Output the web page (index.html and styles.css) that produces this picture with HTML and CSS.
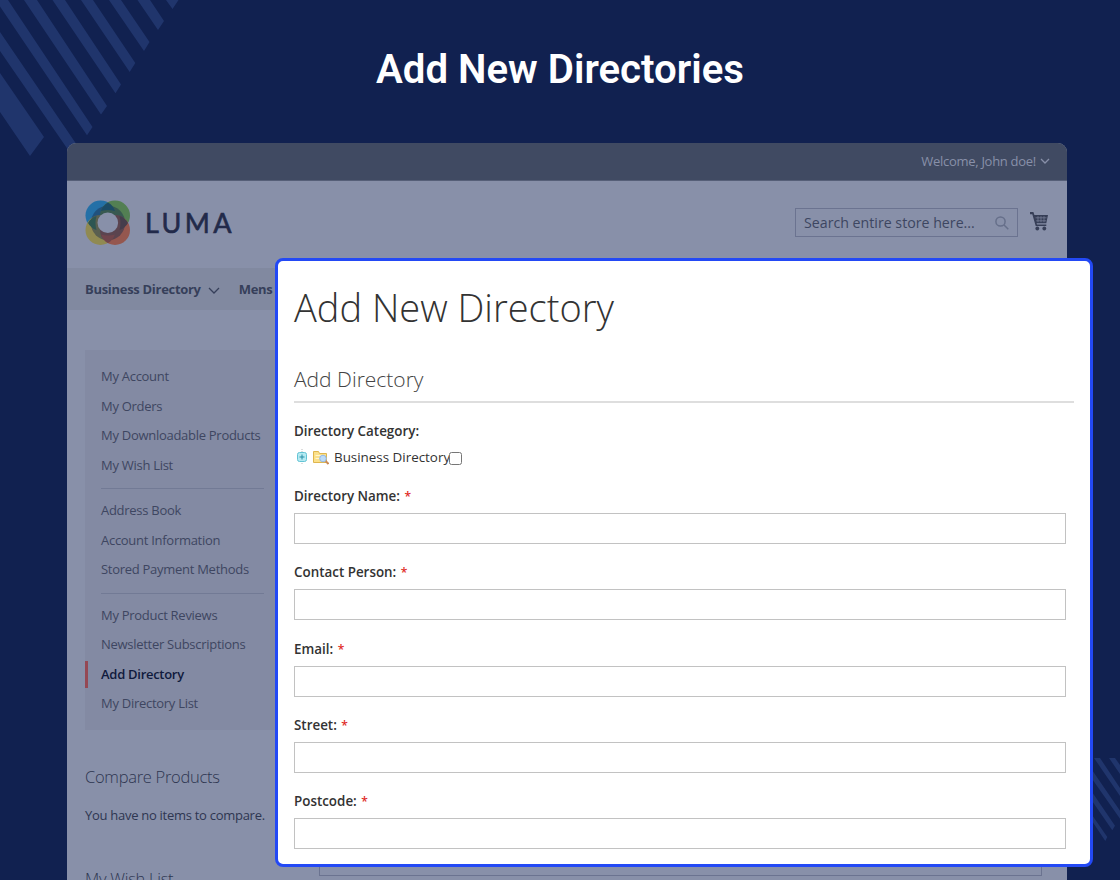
FILE: index.html
```html
<!DOCTYPE html>
<html lang="en">

<head>
    <meta charset="UTF-8">
    <meta name="viewport" content="width=device-width, initial-scale=1.0">
    <title>Add New Directories</title>
    <link rel="stylesheet" href="styles.css">
</head>

<body>
    <svg class="stripes" width="1120" height="880" viewBox="0 0 1120 880">
        <path d="M0 73L44 137L30 156L0 112zM0 32L79 148L73 157L0 51zM0 0H8L92.5 127L87 135.3L0 6.5zM24 0H37L107 106L101 114.5zM52.5 0H65L121 84.5L115.5 93.3zM81 0H93L135.3 63L129.7 72zM109 0H121L149.5 42L144 51zM137.5 0H150L164 21L158 30zM166 0H178.5L172.5 9z"/>
        <path d="M1090 812L1107.3 837L1105.3 841L1090 818zM1090 789L1115 825.7L1112.3 830.3L1090 798zM1090 767L1120 810.7V818.7L1090 776zM1094 758H1100L1120 788V796zM1109 758H1115L1120 765V774z"/>
    </svg>

    <h1 class="page-title">Add New Directories</h1>

    <div class="window">
        <div class="topbar">
            <span>Welcome, John doe!</span>
            <svg class="chevron" width="10" height="6" viewBox="0 0 10 6"><path d="M1 1l4 4 4-4"/></svg>
        </div>
        <header class="header">
            <div class="logo">
                <svg width="46" height="46" viewBox="0 0 46 46">
                    <circle cx="15.5" cy="15.5" r="15" fill="#2470a7"/>
                    <circle cx="30" cy="15.5" r="15" fill="#537f53"/>
                    <circle cx="15.5" cy="30" r="15" fill="#908a52"/>
                    <circle cx="30" cy="30" r="15" fill="#95574f"/>
                    <circle cx="23" cy="23" r="17.2" fill="#1e3150" fill-opacity=".48"/>
                    <path d="M23 2.6a15 15 0 0 0-7 8.5q7-2 14 0a15 15 0 0 0-7-8.5z" fill="#1c4b66"/>
                    <path d="M3 23a15 15 0 0 1 8.5-7q-2 7 0 14a15 15 0 0 1-8.5-7z" fill="#2d5652"/>
                    <path d="M43 23a15 15 0 0 0-8.5-7q2 7 0 14a15 15 0 0 0 8.5-7z" fill="#443d4c"/>
                    <path d="M23 43a15 15 0 0 1-7-8.5q7 2 14 0a15 15 0 0 1-7 8.5z" fill="#70454c"/>
                    <circle cx="22.8" cy="22.7" r="10.3" fill="#8890a9"/>
                </svg>
                <span class="logo-text">LUMA</span>
            </div>
            <div class="search">
                <span>Search entire store here...</span>
                <svg width="14" height="14" viewBox="0 0 14 14"><circle cx="5.5" cy="5.5" r="4.6"/><path d="M9 9l4.3 4.3"/></svg>
            </div>
            <svg class="cart" width="18" height="19" viewBox="0 0 18 19">
                <path d="M0 0h3.4l1 3H18l-1.7 8.3H6.6l.4 1.3h9.3v1.5H5.7L2.3 2.2H0z"/>
                <circle cx="7.3" cy="16.5" r="1.9"/>
                <circle cx="14.3" cy="16.5" r="1.9"/>
                <path class="cart-mesh" d="M5.5 5.8h11M6.2 8.8h10M8 4.2v6M11 4.2v6M14 4.2v6"/>
            </svg>
        </header>
        <nav class="nav">
            <span>Business Directory</span>
            <svg class="chevron" width="12" height="7" viewBox="0 0 12 7"><path d="M1 1l5 5 5-5"/></svg>
            <span>Mens</span>
        </nav>
        <div class="content">
            <aside class="sidebar">
                <ul class="menu">
                    <li>My Account</li>
                    <li>My Orders</li>
                    <li>My Downloadable Products</li>
                    <li>My Wish List</li>
                    <li class="delimiter"></li>
                    <li>Address Book</li>
                    <li>Account Information</li>
                    <li>Stored Payment Methods</li>
                    <li class="delimiter"></li>
                    <li>My Product Reviews</li>
                    <li>Newsletter Subscriptions</li>
                    <li class="current">Add Directory</li>
                    <li>My Directory List</li>
                </ul>
                <h3 class="block-title">Compare Products</h3>
                <p class="block-text">You have no items to compare.</p>
                <h3 class="block-title">My Wish List</h3>
            </aside>
            <div class="hidden-field"></div>
        </div>
    </div>

    <div class="modal">
        <h2 class="modal-title">Add New Directory</h2>
        <h3 class="legend">Add Directory</h3>
        <p class="label">Directory Category:</p>
        <div class="tree">
            <svg width="12" height="16" viewBox="0 0 12 16">
                <path d="M6 0v16" stroke="#bbb" stroke-dasharray="1 1"/>
                <rect x="1.5" y="3.5" width="9" height="9" rx="2" fill="#b5eaf2" stroke="#62c3d4"/>
                <path d="M3.5 8h5M6 5.5v5" stroke="#288da5"/>
            </svg>
            <svg class="folder" width="16" height="16" viewBox="0 0 16 16">
                <path d="M.5 13.5v-11h5l1 2h7v9z" fill="#fbe08a" stroke="#dfb64e"/>
                <path d="M2.5 6.5h9.5M2.5 9.5h4" stroke="#fff6cf"/>
                <path d="M12.5 12l3 3" stroke="#c98a55" stroke-width="2"/>
                <circle cx="10" cy="9.5" r="3.3" fill="#bcdcf8" stroke="#93b7e3"/>
            </svg>
            <span>Business Directory</span>
            <input type="checkbox" class="checkbox">
        </div>
        <div class="field">
            <label class="label" for="name">Directory Name: <em>*</em></label>
            <input type="text" id="name" class="input-field">
        </div>
        <div class="field">
            <label class="label" for="person">Contact Person: <em>*</em></label>
            <input type="text" id="person" class="input-field">
        </div>
        <div class="field">
            <label class="label" for="email">Email: <em>*</em></label>
            <input type="text" id="email" class="input-field">
        </div>
        <div class="field">
            <label class="label" for="street">Street: <em>*</em></label>
            <input type="text" id="street" class="input-field">
        </div>
        <div class="field">
            <label class="label" for="postcode">Postcode: <em>*</em></label>
            <input type="text" id="postcode" class="input-field">
        </div>
    </div>
</body>

</html>
```

FILE: styles.css
```css
* {
    box-sizing: border-box;
}

body {
    position: relative;
    margin: 0;
    height: 880px;
    overflow: hidden;
    background-color: #112150;
    font-family: "Open Sans", sans-serif;
    font-size: 13px;
}

h1, h2, h3, p, ul {
    margin: 0;
    padding: 0;
}

.stripes {
    position: absolute;
    top: 0;
    left: 0;
    fill: #20356c;
}

.page-title {
    height: 143px;
    padding-top: 46px;
    text-align: center;
    font-family: Roboto, sans-serif;
    font-weight: 600;
    font-size: 40.2px;
    line-height: 48px;
    color: #fff;
}

.window {
    position: relative;
    width: 1000px;
    height: 760px;
    margin-left: 67px;
    border-radius: 9px 9px 0 0;
    overflow: hidden;
    background-color: #8890a9;
    letter-spacing: -0.28px;
    color: #2e3651;
}

.topbar {
    display: flex;
    justify-content: flex-end;
    align-items: center;
    gap: 4px;
    height: 38px;
    padding: 0 17px 2px 0;
    background-color: #404a62;
    border-bottom: 1px solid #565f78;
    color: #8890a9;
}

.chevron {
    fill: none;
    stroke: currentColor;
    stroke-width: 1.3;
}

.header {
    display: flex;
    align-items: center;
    height: 87px;
    padding: 0 18px;
}

.logo {
    display: flex;
    align-items: center;
    flex: 1;
    gap: 14px;
    padding-bottom: 3px;
}

.logo-text {
    font-family: Lato, sans-serif;
    font-size: 27px;
    line-height: 32px;
    letter-spacing: 3.4px;
    color: #222a4a;
    -webkit-text-stroke: 0.6px #222a4a;
}

.search {
    display: flex;
    justify-content: space-between;
    align-items: center;
    width: 223px;
    height: 29px;
    margin: 0 12px 4px 0;
    padding: 0 8px;
    border: 1px solid #6b7390;
    font-size: 14.2px;
    letter-spacing: 0;
    color: #3d4661;
}

.search svg {
    fill: none;
    stroke: #666f8a;
    stroke-width: 1.5;
}

.cart {
    margin: 0 1px 7px 0;
    fill: #363e57;
}

.cart-mesh {
    fill: none;
    stroke: #737b94;
    stroke-width: 0.8;
}

.nav {
    display: flex;
    align-items: center;
    height: 42px;
    padding: 0 18px;
    background-color: #8189a0;
    font-weight: 700;
    letter-spacing: -0.3px;
    color: #363f5a;
}

.nav .chevron {
    margin: 2px 19px 0 7px;
}

.content {
    display: flex;
    gap: 39px;
    padding: 40px 18px 0;
}

.sidebar {
    width: 195px;
}

.menu {
    height: 380px;
    padding-top: 12px;
    background-color: #838aa3;
    list-style: none;
    color: #3e4661;
}

.menu li {
    height: 29.5px;
    padding-left: 16px;
    line-height: 29.5px;
    white-space: nowrap;
}

.menu .delimiter {
    width: 179px;
    height: 1px;
    margin: 8px 0 7px;
    background: #727a95 content-box;
}

.menu .current {
    height: 27px;
    margin: 1px 0 1.5px;
    padding-left: 13px;
    line-height: 27px;
    border-left: 3px solid #954854;
    font-weight: 600;
    color: #101a3d;
}

.block-title {
    margin-top: 35px;
    font-weight: 300;
    font-size: 16.5px;
    line-height: 23px;
}

.block-text {
    margin: 17px 0 0;
    line-height: 20px;
    white-space: nowrap;
}

.block-text + .block-title {
    margin-top: 42px;
}

/* bottom edge of the form behind the dialog */
.hidden-field {
    width: 723px;
    height: 526px;
    border: 1px solid #6b7390;
}

.modal {
    position: absolute;
    top: 258px;
    left: 275px;
    width: 818px;
    height: 609px;
    padding: 21px 16px 0;
    border: 3px solid #2349f5;
    border-radius: 8px;
    background-color: #fff;
    font-size: 13.4px;
    color: #333;
}

.modal-title {
    font-weight: 300;
    font-size: 38px;
    line-height: 50px;
}

.legend {
    width: 780px;
    height: 49px;
    margin: 22px 0 18px;
    padding-top: 10px;
    border-bottom: 2px solid #dedede;
    font-weight: 300;
    font-size: 21px;
    line-height: 30px;
    color: #444;
}

.label {
    display: block;
    font-weight: 600;
    font-size: 13.4px;
    line-height: 20px;
}

.label em {
    margin-left: 1px;
    font-style: normal;
    font-size: 12px;
    color: #e02b27;
}

.tree {
    display: flex;
    align-items: center;
    height: 20px;
    margin: 6px 0 19px 2px;
}

.folder {
    margin: 0 5px 0 5px;
}

.checkbox {
    width: 13px;
    height: 13px;
    margin: 2px 0 0 -1px;
}

.field {
    height: 76.3px;
}

.input-field {
    display: block;
    width: 772px;
    height: 31px;
    margin-top: 6px;
    border: 1px solid #c2c2c2;
}
```
